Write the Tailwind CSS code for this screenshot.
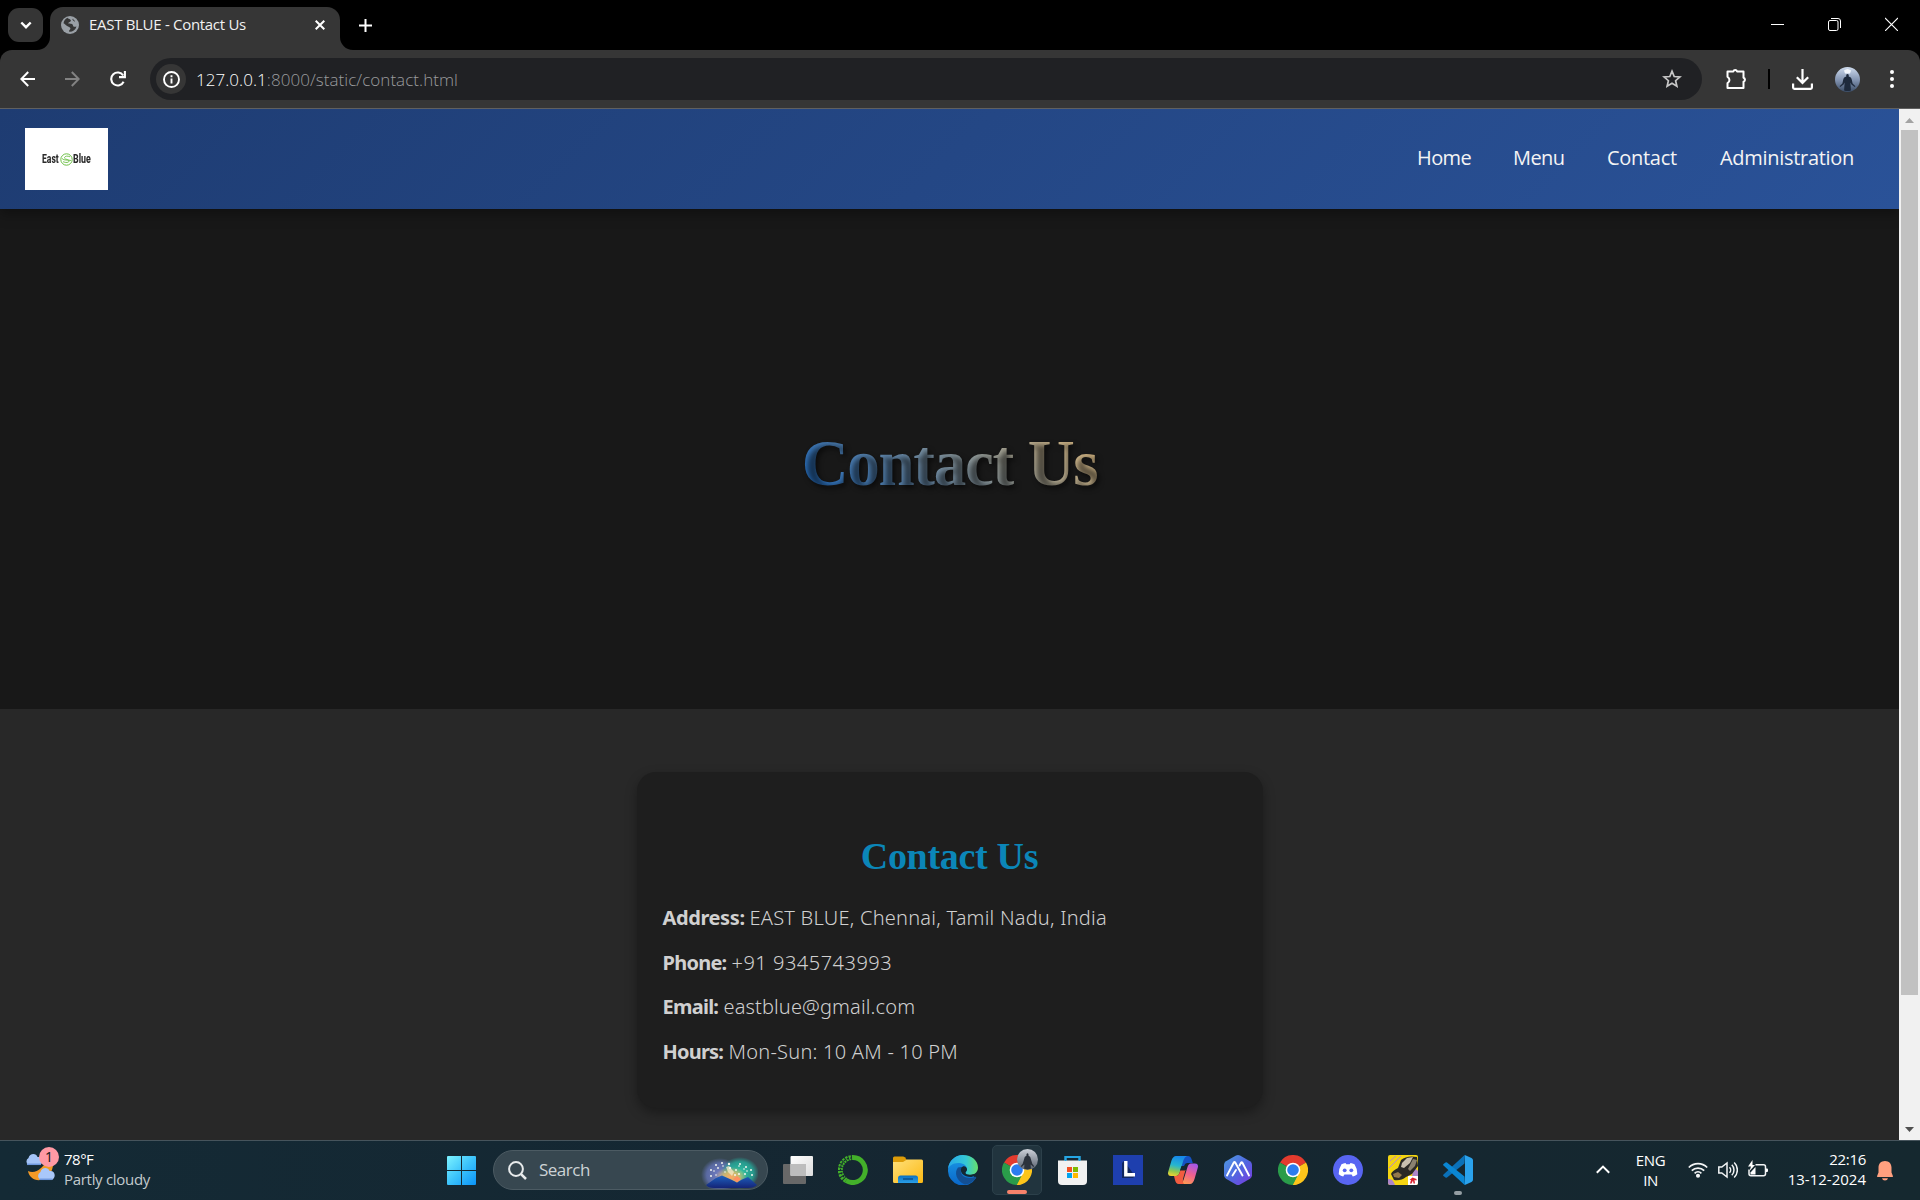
<!DOCTYPE html>
<html lang="en">
<head>
<meta charset="utf-8">
<title>EAST BLUE - Contact Us</title>
<script src="https://cdn.jsdelivr.net/npm/@tailwindcss/browser@4"></script>
</head>
<body class="flex h-[1200px] w-[1920px] flex-col overflow-hidden bg-black font-['Noto_Sans',sans-serif]">

<!-- Tab strip -->
<div class="flex h-[50px] shrink-0 items-start bg-black">
  <div class="mt-2 ml-2 flex h-[34px] w-[35px] items-center justify-center rounded-[11px] bg-[#353535]">
    <svg width="12" height="8" viewBox="0 0 12 8" fill="none" stroke="#fff" stroke-width="2.4"><path d="M1.3 1.5 6 6.2l4.700-4.700"/></svg>
  </div>
  <div class="relative mt-[7px] ml-[7px] flex h-[43px] w-[290px] items-start rounded-t-[13px] bg-[#363636]">
    <svg class="absolute bottom-0 -left-[13px]" width="13" height="13"><path d="M13 0A13 13 0 0 1 0 13H13Z" fill="#363636"/></svg>
    <svg class="absolute -right-[13px] bottom-0" width="13" height="13"><path d="M0 0A13 13 0 0 0 13 13H0Z" fill="#363636"/></svg>
    <svg class="mt-[9px] ml-[11px]" width="18" height="18" viewBox="0 0 18 18"><circle cx="9" cy="9" r="9" fill="#9aa0a6"/><path d="M6.500 1.800C7 3.200 9.800 3 9.900 4.600c0 1.600-2.500 1.400-2.700 3 1.800.2 4.500-.2 4.800 1.900.1 1.500 1.600 1.500 3.500 1A6.800 6.800 0 0 1 8 15.600c-.1-1.700 1.600-1.700 1.400-3.300-.3-1.500-2.200-1.700-3.300-2.400-1.500-1-2.300-2-3.600-2.700A6.900 6.900 0 0 1 6.500 1.800Z" fill="#363636"/><path d="M12 2.900c-.2 1.200.5 2 1.800 2.200" stroke="#363636" fill="none"/></svg>
    <div class="mt-[6px] ml-[10px] w-[225px] font-['Open_Sans'] text-[15px] leading-[22px] tracking-[-0.3px] text-[#f1f1f1]">EAST BLUE - Contact Us</div>
    <svg class="absolute top-[13px] left-[265px]" width="10" height="10" viewBox="0 0 10 10" stroke="#fff" stroke-width="2"><path d="m.7.7 8.600 8.600M9.300.7.7 9.300"/></svg>
  </div>
  <svg class="mt-[19px] ml-[19px]" width="13" height="13" viewBox="0 0 13 13" stroke="#fff" stroke-width="2"><path d="M0 6.500h13M6.500 0v13"/></svg>
  <div class="mt-[17px] mr-[22px] ml-auto flex items-center gap-[44px]">
    <svg width="13" height="14" stroke="#fff"><path d="M0 7.500h13"/></svg>
    <svg width="13" height="14" viewBox="0 0 13 14" fill="none" stroke="#fff"><rect x=".5" y="3.500" width="9.500" height="10" rx="1.500"/><path d="M3 1.500h7a2.500 2.500 0 0 1 2.500 2.500v7"/></svg>
    <svg width="13" height="14" viewBox="0 0 13 14" stroke="#fff" stroke-width="1.100"><path d="m0 1 13 13M13 1 0 14"/></svg>
  </div>
</div>

<!-- Toolbar -->
<div class="flex h-[59px] shrink-0 items-center rounded-t-[12px] border-b border-[#606060] bg-[#363636]">
  <svg class="ml-5" width="15" height="16" viewBox="0 0 15 16" fill="none" stroke="#fff" stroke-width="2"><path d="M15 8H1.500M8.200 1 1.300 8l6.900 7"/></svg>
  <svg class="ml-[30px]" width="15" height="16" viewBox="0 0 15 16" fill="none" stroke="#828282" stroke-width="2"><path d="M0 8h13.500M6.800 1l6.900 7-6.900 7"/></svg>
  <svg class="ml-[30px]" width="16" height="16" viewBox="0 0 16 16" fill="none" stroke="#fff" stroke-width="2.100"><path d="M13.600 10.800A6.500 6.500 0 1 1 13.200 4.500"/><path d="M14.900 0v6.100H9"/></svg>
  <div class="ml-6 flex h-[42px] w-[1552px] items-center rounded-full bg-[#202124]">
    <div class="ml-[6px] flex h-[30px] w-[30px] items-center justify-center rounded-full bg-[#363636]">
      <svg width="17" height="17" viewBox="0 0 17 17" fill="none" stroke="#fff" stroke-width="1.900"><circle cx="8.500" cy="8.500" r="7.500"/><path d="M8.500 7.500v5M8.500 4.300v2"/></svg>
    </div>
    <div class="mt-[1px] ml-[10px] font-['Open_Sans'] text-[17px] font-light tracking-[0.05px] text-[#9a9b9d]"><span class="text-white">127.0.0.1</span>:8000/static/contact.html</div>
    <svg class="mr-[20px] ml-auto" width="20" height="20" viewBox="0 0 20 20" fill="none" stroke="#c7c7c7" stroke-width="1.700"><path d="m10 2.200 2.200 5.300 5.700.5-4.300 3.700 1.300 5.600-4.900-3-4.900 3 1.300-5.600L2.100 8l5.700-.5Z"/></svg>
  </div>
  <svg class="ml-[23px]" width="23" height="22" viewBox="0 0 23 22" fill="none" stroke="#fff" stroke-width="2" stroke-linejoin="round"><path d="M2.500 3.500h5.800a2 2 0 0 1 3.800 0h6.400v6.300a2.100 2.100 0 0 1 0 4V20h-16v-4.800a3.600 3.600 0 0 0 0-6.400Z"/></svg>
  <div class="ml-[20px] h-5 w-[2px] bg-black"></div>
  <svg class="ml-[22px]" width="21" height="21" viewBox="0 0 21 21" fill="none" stroke="#fff" stroke-width="2.200"><path d="M10.500 0v13.500M4.800 8.200l5.700 5.700 5.700-5.700M1.100 14.500v4.100q0 1.300 1.300 1.300h16.200q1.300 0 1.300-1.300v-4.100"/></svg>
  <svg class="ml-[22px]" width="25" height="25" viewBox="0 0 25 25"><defs><linearGradient id="av" x2="0" y2="1"><stop offset="0" stop-color="#cfdcee"/><stop offset=".5" stop-color="#8697b4"/><stop offset="1" stop-color="#3a4c66"/></linearGradient></defs><circle cx="12.500" cy="12.500" r="12.500" fill="url(#av)"/><path d="M9 3.500q3.500-3 7 0l-1 3h-5Z" fill="#f3f7fd"/><path d="M12.500 7c1.100 0 1.500 1 1.200 2.500 1.800.5 2.700 1.200 3.100 3.300l.8 3.700 2.800 2.700-.7.900-3.300-2.500-1-2.200.5 8.200q-3.400 1-6.800 0l.5-8.200-1 2.200-3.300 2.500-.7-.9 2.800-2.700.8-3.700c.4-2.100 1.300-2.800 3.100-3.300C11 8 11.400 7 12.500 7Z" fill="#1e2a3c"/></svg>
  <svg class="ml-[30px]" width="4" height="18" viewBox="0 0 4 18" fill="#fff"><circle cx="2" cy="2" r="2"/><circle cx="2" cy="9" r="2"/><circle cx="2" cy="16" r="2"/></svg>
</div>

<!-- Viewport -->
<div class="flex h-[1031px] shrink-0">
  <main class="flex w-[1899px] flex-col overflow-hidden bg-[#282828]">
    <header class="z-10 flex h-[100px] shrink-0 items-center bg-[linear-gradient(135deg,#1e3c72,#2a5298)] pl-[25px] shadow-[0_5px_12px_rgba(0,0,0,0.35)]">
      <div class="flex h-[62px] w-[83px] items-center bg-white pl-[17px] font-['Roboto'] text-[13px] font-extrabold text-[#2b2b2b]">
        <span class="w-[18px] origin-left scale-x-[0.66]">East</span>
        <svg width="13" height="13" viewBox="0 0 13 13" fill="none" stroke="#6cbf45"><circle cx="6.500" cy="6.500" r="5.700" stroke-width="1"/><path d="M10 3.800C7 2.300 4 3.500 4.600 5.200c.6 1.500 4.700 1 4.500 2.900C8.900 9.700 6 10 3 8.700M2 5.500c2 2.500 6 1 9 2" stroke-width=".9"/></svg>
        <span class="w-[18px] origin-left scale-x-[0.68]">Blue</span>
      </div>
      <nav class="ml-auto flex pb-[2px] font-['Open_Sans'] text-[20px] font-medium tracking-[-0.3px] text-[#f4f4f4]">
        <a class="w-24 tracking-[-0.600px]">Home</a>
        <a class="w-[94px] tracking-[-0.600px]">Menu</a>
        <a class="w-[113px]">Contact</a>
        <a class="w-[179px]">Administration</a>
      </nav>
    </header>

    <section class="flex h-[500px] shrink-0 items-center justify-center bg-[#181818] pt-[7px]">
      <h1 class="bg-[linear-gradient(45deg,#1565c0,#e6bd7c)] bg-clip-text font-['Liberation_Serif',serif] text-[65px] leading-[80px] font-bold tracking-[-1.300px] text-transparent [text-shadow:2.500px_2.500px_5px_rgba(0,0,0,0.55)]">Contact Us</h1>
    </section>

    <section class="flex justify-center pt-[63px]">
      <div class="h-[336px] w-[626px] rounded-[19px] bg-[#1e1e1e] px-[26px] shadow-[0_5px_12px_rgba(0,0,0,0.35)]">
        <h2 class="mt-[59px] text-center font-['Liberation_Serif',serif] text-[38px] leading-[50px] font-bold tracking-[-0.300px] text-[#0b86b8]">Contact Us</h2>
        <div class="mt-[15px] text-[20px] leading-[44.500px] font-light whitespace-nowrap text-[#d0d0d0]">
          <p class="flex h-[44.500px]"><strong class="w-[87px] font-bold tracking-[-0.400px]">Address:</strong><span class="tracking-[0.230px]">EAST BLUE, Chennai, Tamil Nadu, India</span></p>
          <p class="flex h-[44.500px]"><strong class="w-[69px] font-bold tracking-[-0.750px]">Phone:</strong><span class="tracking-[0.500px]">+91 9345743993</span></p>
          <p class="flex h-[44.500px]"><strong class="w-[61px] font-bold tracking-[-0.750px]">Email:</strong><span class="tracking-[0.130px]">eastblue@gmail.com</span></p>
          <p class="flex h-[44.500px]"><strong class="w-[66px] font-bold tracking-[-0.800px]">Hours:</strong><span class="tracking-[0.240px]">Mon-Sun: 10 AM - 10 PM</span></p>
        </div>
      </div>
    </section>
  </main>

  <!-- Scrollbar -->
  <div class="flex w-[21px] flex-col items-center bg-[#f1f1f1]">
    <svg class="mt-[9px]" width="9" height="5"><path d="M0 5 4.500 0 9 5Z" fill="#a3a3a3"/></svg>
    <div class="mt-[7px] h-[865px] w-[17px] bg-[#c1c1c1]"></div>
    <svg class="mt-auto mb-2" width="9" height="5"><path d="M0 0 4.500 5 9 0Z" fill="#505050"/></svg>
  </div>
</div>

<!-- Taskbar -->
<footer class="flex h-[60px] shrink-0 border-t border-[#46545c] bg-[linear-gradient(90deg,#142a35,#152631_50%,#15282f)] text-white">
  <div class="relative ml-[24px] h-full w-[40px]">
    <svg class="absolute top-3 left-0" width="32" height="30" viewBox="0 0 32 30"><path d="M29 7c1 9-3 18-12 20C10 28 5 24 4 18c4 2 9 1 13-3 3-3 6-6 12-8Z" fill="#f39a26"/><path d="M4.500 12a4 4 0 0 1 0-7c1-5 8-5 9-1 5-1 7 6 2 8Z" fill="#a3c3f7"/><path d="M3 11.300h14" stroke="#6e97dc" stroke-width="1.500"/><path d="M16.500 27a4.500 4.500 0 0 1 0-8c1-5 8-5 9-1 6-1 7 7 2 9Z" fill="#a9c8fa"/><path d="M15.500 26.300h13" stroke="#6e97dc" stroke-width="1.500"/></svg>
    <div class="absolute top-[6px] left-[15px] flex h-5 w-5 items-center justify-center rounded-full bg-[#ff99a4] text-[14px] leading-none text-[#1c1c1c]">1</div>
  </div>
  <div class="w-[383px] pt-[8px] font-['Open_Sans'] text-[15px] leading-[20px]">
    <div class="tracking-[-0.500px]">78°F</div>
    <div class="tracking-[-0.300px] text-[#c3cacd]">Partly cloudy</div>
  </div>
  <svg class="mt-[15px]" width="29" height="29" viewBox="0 0 29 29"><defs><linearGradient id="win" x2="1" y2="1"><stop offset="0" stop-color="#7df3ff"/><stop offset=".5" stop-color="#3cc3fb"/><stop offset="1" stop-color="#0a93f8"/></linearGradient></defs><path d="M1 0h13v14H0V1q0-1 1-1ZM15 0h13q1 0 1 1v13H15ZM0 15h14v14H1q-1 0-1-1ZM15 15h14v13q0 1-1 1H15Z" fill="url(#win)"/></svg>
  <div class="mt-[9px] ml-[17px] flex h-[40px] w-[275px] items-center rounded-full border border-[#4c5b63] bg-[#374750] pl-[14px]">
    <svg width="19" height="19" viewBox="0 0 19 19" fill="none" stroke="#e8ebec" stroke-width="2"><circle cx="8" cy="8" r="6.900"/><path d="m12.800 12.800 5.200 5.200" stroke-width="2.500"/></svg>
    <span class="ml-[12px] font-['Open_Sans'] text-[17px] tracking-[-0.500px] text-[#cdd3d6]">Search</span>
    <svg class="mt-[5px] mr-[9px] ml-auto" width="57" height="32" viewBox="0 0 57 32">
      <defs><radialGradient id="g1"><stop offset="0" stop-color="#7680c8"/><stop offset=".7" stop-color="#6070b0" stop-opacity=".85"/><stop offset="1" stop-color="#6070b0" stop-opacity="0"/></radialGradient><radialGradient id="g2"><stop offset="0" stop-color="#2fc9a8"/><stop offset=".7" stop-color="#25a697" stop-opacity=".85"/><stop offset="1" stop-color="#25a697" stop-opacity="0"/></radialGradient><radialGradient id="g3"><stop offset="0" stop-color="#ffa763"/><stop offset=".5" stop-color="#e8bd66" stop-opacity=".8"/><stop offset="1" stop-color="#e8bd66" stop-opacity="0"/></radialGradient><linearGradient id="mt" x2="0" y2="1"><stop offset="0" stop-color="#1e61bf"/><stop offset="1" stop-color="#142477"/></linearGradient></defs>
      <ellipse cx="19" cy="18" rx="19" ry="17" fill="url(#g1)"/><ellipse cx="39" cy="16" rx="19" ry="16" fill="url(#g2)"/><ellipse cx="30" cy="20" rx="16" ry="10" fill="url(#g3)"/>
      <path d="m5 28 10-7 6-2.500 9 4 6 3 5-3 6-2.500 9 8q-3 3-9 3H13q-6 0-8-3Z" fill="url(#mt)"/><path d="m32 22 4 3.500 4-3.500-4-3Z" fill="#ff8f60"/>
      <path d="m25 10 3-1 5 6-2 4-4-4Z" fill="#f3e6c4" opacity=".8"/>
      <g fill="#f3f6ee"><circle cx="15" cy="8" r="1"/><circle cx="17" cy="11" r=".9"/><circle cx="21" cy="6" r="1"/><circle cx="22" cy="9" r=".8"/><circle cx="10" cy="13" r="1"/><circle cx="13" cy="14" r=".8"/><circle cx="10" cy="19" r="1"/><circle cx="15" cy="18" r=".8"/><circle cx="28" cy="7" r="1.200"/><circle cx="29" cy="11" r="1.200"/><circle cx="39" cy="7" r="1"/><circle cx="38" cy="9" r=".8"/><circle cx="45" cy="10" r="1"/><circle cx="43" cy="12" r=".8"/><circle cx="50" cy="13" r="1"/><circle cx="46" cy="14" r=".8"/><circle cx="51" cy="18" r="1"/><circle cx="44" cy="17" r="1"/><circle cx="38" cy="17" r="1.100"/><circle cx="34" cy="18" r="1"/><circle cx="35" cy="13" r="1"/><circle cx="24" cy="15" r=".8"/></g>
    </svg>
  </div>

  <div class="ml-[2px] flex w-[715px] items-start">
    <!-- Task view -->
    <div class="flex h-[58px] w-[55px] items-center justify-center"><svg width="30" height="30" viewBox="0 0 30 30"><defs><linearGradient id="tv" x2="1" y2="1"><stop offset="0" stop-color="#fff"/><stop offset="1" stop-color="#dcdcdc"/></linearGradient></defs><rect x="0" y="9" width="23" height="20" rx="1" fill="#686868"/><rect x="7.500" y="1" width="22.500" height="20" rx="1" fill="url(#tv)"/><path d="M7.500 9H23v12H8.500q-1 0-1-1Z" fill="#bdbdbd"/></svg></div>
    <!-- Anaconda -->
    <div class="flex h-[58px] w-[55px] items-center justify-center"><svg width="30" height="30" viewBox="0 0 30 30" fill="none" stroke="#43b02a"><path d="M15 2.500a12.500 12.500 0 1 1-7 23" stroke-width="5"/><path d="M8 25.500A12.500 12.500 0 0 1 15 2.500" stroke-width="5" stroke-dasharray="2.200 .9"/><path d="M6 22A11 11 0 0 1 13 3" stroke="#142833" stroke-width="1.200" stroke-dasharray="2 1.500"/></svg></div>
    <!-- Explorer -->
    <div class="flex h-[58px] w-[55px] items-center justify-center"><svg width="30" height="28" viewBox="0 0 30 28"><defs><linearGradient id="fo" x2="1" y2="1"><stop offset="0" stop-color="#ffe07a"/><stop offset="1" stop-color="#fbb914"/></linearGradient><linearGradient id="fb" x2="0" y2="1"><stop offset="0" stop-color="#0a6fc0"/><stop offset="1" stop-color="#2aa0e8"/></linearGradient></defs><path d="M0 2q0-1.500 1.500-1.500H10q1 0 1.800.8L14 4v2H0Z" fill="#dd9c08"/><path d="M0 6h10l4-2.500h14.500Q30 3.500 30 5v20.500q0 1.500-1.500 1.500h-27Q0 27 0 25.500Z" fill="url(#fo)"/><path d="M5 27v-5q0-2.500 2.500-2.500h15q2.500 0 2.500 2.500v5Z" fill="url(#fb)"/><path d="M10 23h10" stroke="#0a4a86" stroke-width="1.400"/></svg></div>
    <!-- Edge -->
    <div class="flex h-[58px] w-[55px] items-center justify-center"><svg width="30" height="30" viewBox="0 0 30 30"><defs><linearGradient id="e1" x1="0" x2="1"><stop offset="0" stop-color="#27a8e8"/><stop offset=".6" stop-color="#35c8d6"/><stop offset="1" stop-color="#66e06a"/></linearGradient><linearGradient id="e2" x2="0" y2="1"><stop offset="0" stop-color="#1b9be8"/><stop offset="1" stop-color="#0a66c8"/></linearGradient></defs><path d="M0 15A15 15 0 0 1 15 0l6 18 7 5A15 15 0 0 1 0 15Z" fill="url(#e2)"/><path d="M0 14C1 5 8 0 15 0c9 0 15 6 15 12.500 0 5-4 7.500-8 7.500-3.500 0-5-1.500-4.500-2.500 1-1.300 1.700-2.200 1.500-3.500C18.500 9.500 14 8 10 8 5 8 1 11 0 14Z" fill="url(#e1)"/><path d="M10 12.500C6 17 8 26 17 29.500c5-.5 9-3.500 11-6.500.8-1.200-.3-1.600-1.200-1.100-6 2.700-14 .1-14-5.900 0-2 .8-3 1.500-4-1.500-.3-3 .2-4.300.5Z" fill="#134f93"/><path d="M14.500 11.700c-2 1-2.500 5 .5 7.800 2 1.700 5 2.700 8.500 2.500l5-2V18c-3 2.300-11.500 2.500-11-.5 1-1.300 1.700-2.200 1.500-3.500-.3-2-2.500-3.500-4.500-2.300Z" fill="#142833"/></svg></div>
    <!-- Chrome, active window -->
    <div class="relative mt-[4px] ml-[2px] flex h-[50px] w-[50px] items-center justify-center rounded-[5px] border border-[#2c404a] bg-[#21343e]">
      <svg width="30" height="30" viewBox="0 0 30 30"><path d="M15 15 2 7.500A15 15 0 0 1 28 7.500Z" fill="#e33b2e"/><path d="M15 15 28 7.500A15 15 0 0 1 15 30Z" fill="#fdc51b"/><path d="M15 15v15A15 15 0 0 1 2 7.500Z" fill="#2a9c4a"/><path d="m9 18.500 6 3.500 6-3.500L15 30Q10 28 9 18.500Z" fill="#2a9c4a"/><path d="M15 8h13.300l-7.300 3Z" fill="#e33b2e"/><path d="m21 18.500-6 11.500h2q7-2 11-8.500Z" fill="#fdc51b"/><circle cx="15" cy="15" r="7.300" fill="#fff"/><circle cx="15" cy="15" r="5.800" fill="#2b7cf0"/></svg>
      <svg class="absolute top-[3px] left-[24px]" width="21" height="21" viewBox="0 0 25 25"><defs><linearGradient id="av2" x2="0" y2="1"><stop offset="0" stop-color="#cdd2da"/><stop offset=".55" stop-color="#8b929d"/><stop offset="1" stop-color="#596270"/></linearGradient></defs><circle cx="12.500" cy="12.500" r="12.500" fill="url(#av2)"/><path d="M12.500 5c1 0 1.400 1 1.200 3 1.500.5 2.300 1.500 2.700 3.500l1.800 6 2.300 3-1 1-3.300-3 .3 5q-4 1-8 0l.3-5-3.300 3-1-1 2.300-3 1.800-6c.4-2 1.200-3 2.700-3.500C11.100 6 11.500 5 12.500 5Z" fill="#2b323c"/></svg>
      <div class="absolute bottom-0 left-[14px] h-[4px] w-[20px] rounded-full bg-[#f8826b]"></div>
    </div>
    <!-- Store -->
    <div class="ml-[3px] flex h-[58px] w-[55px] items-center justify-center"><svg width="29" height="30" viewBox="0 0 29 30"><path d="M7.500 7V2h14v5" fill="none" stroke="#2cb6ef" stroke-width="2"/><path d="M0 5.500h29V26q0 4-4 4H4q-4 0-4-4Z" fill="#f1f1f1"/><path d="M7.500 6V2h14v4" fill="none" stroke="#25a6e4" stroke-width="1.800"/><path d="M9 12h5v5H9Z" fill="#f25022"/><path d="M15 12h5v5h-5Z" fill="#7fba00"/><path d="M9 18h5v5H9Z" fill="#00a4ef"/><path d="M15 18h5v5h-5Z" fill="#ffb900"/></svg></div>
    <!-- L -->
    <div class="flex h-[58px] w-[55px] items-center justify-center"><svg width="30" height="30" viewBox="0 0 30 30"><path d="M0 0h30v30H0Z" fill="#1e3fae"/><path d="m11 6-2 2v15h11l2-2Z" fill="#10265f"/><path d="M12.800 6v13.700H22" fill="none" stroke="#fff" stroke-width="3.400"/></svg></div>
    <!-- Copilot -->
    <div class="flex h-[58px] w-[55px] items-center justify-center"><svg width="30" height="28" viewBox="0 0 30 28"><defs><linearGradient id="c1" x1=".4" y1="0" x2=".2" y2="1"><stop offset="0" stop-color="#1789ea"/><stop offset=".45" stop-color="#26b6cf"/><stop offset=".75" stop-color="#8fc850"/><stop offset="1" stop-color="#f2d330"/></linearGradient><linearGradient id="c2" x1=".7" y1="0" x2=".3" y2="1"><stop offset="0" stop-color="#a557e8"/><stop offset=".5" stop-color="#f0608e"/><stop offset="1" stop-color="#fd9a52"/></linearGradient></defs><path d="M14 0h6q2.500 0 3.500 3l1.300 4H19q-2 0-3 3l-3 1Z" fill="#1452c4"/><path d="M8 0h11q-2.500.8-3.500 4l-4 13q-1 3-3.500 3H3q-4 0-2.700-4.500l3.200-11Q5 0 8 0Z" fill="url(#c1)"/><path d="M22 28H12q2.500-.8 3.500-4l4-13q1-3.500 3.500-3.500h4q4 0 2.700 4.500l-3.200 11Q25 28 22 28Z" fill="url(#c2)"/><path d="M16 28h-5.500q-2.500 0-3.500-4l-1-4h2q2.500 0 3.500-3l1-3h5l-2.500 9q-.8 3 1 5Z" fill="#f25c40"/><path d="M12 14.500 13.500 10h5L17 14.500Z" fill="#152832"/></svg></div>
    <!-- Hexagon -->
    <div class="flex h-[58px] w-[55px] items-center justify-center"><svg width="28" height="30" viewBox="0 0 28 30"><defs><linearGradient id="hx" x2="1" y2="1"><stop offset="0" stop-color="#4f9ee3"/><stop offset=".5" stop-color="#5068e0"/><stop offset="1" stop-color="#7b38e0"/></linearGradient></defs><path d="M12 .6q2-1.100 4 0l10 5.700q2 1.200 2 3.500v10.400q0 2.300-2 3.500l-10 5.700q-2 1.100-4 0L2 23.700q-2-1.200-2-3.500V9.800q0-2.300 2-3.500Z" fill="url(#hx)"/><g fill="none" stroke="#fff" stroke-width="1.900" stroke-linecap="round" stroke-linejoin="round"><path d="M3 20.500 9.800 7.500q.7-1.300 1.400 0l7.300 13"/><path d="m8.500 20.500 3.500-5.500M15.500 10.500l1.500-2.700q.7-1.200 1.400 0L25 20.500"/></g></svg></div>
    <!-- Chrome -->
    <div class="flex h-[58px] w-[55px] items-center justify-center"><svg width="30" height="30" viewBox="0 0 30 30"><path d="M15 15 2 7.500A15 15 0 0 1 28 7.500Z" fill="#e33b2e"/><path d="M15 15 28 7.500A15 15 0 0 1 15 30Z" fill="#fdc51b"/><path d="M15 15v15A15 15 0 0 1 2 7.500Z" fill="#2a9c4a"/><path d="m9 18.500 6 3.500 6-3.500L15 30Q10 28 9 18.500Z" fill="#2a9c4a"/><path d="m21 18.500-6 11.500h2q7-2 11-8.500Z" fill="#fdc51b"/><circle cx="15" cy="15" r="7.300" fill="#fff"/><circle cx="15" cy="15" r="5.800" fill="#2b7cf0"/></svg></div>
    <!-- Discord -->
    <div class="flex h-[58px] w-[55px] items-center justify-center"><svg width="30" height="30" viewBox="0 0 30 30"><circle cx="15" cy="15" r="15" fill="#5865f2"/><path d="M8.500 9.300q2-1 4-1.300l.8 1.300h3.400l.8-1.300q2 .3 4 1.300 3 4.500 2.800 10Q22 21 19.800 21.500l-1.200-2h-7.200l-1.200 2Q8 21 5.700 19.300q-.2-5.500 2.800-10Z" fill="#fff"/><circle cx="11.700" cy="15.300" r="1.900" fill="#5865f2"/><circle cx="18.300" cy="15.300" r="1.900" fill="#5865f2"/></svg></div>
    <!-- Game -->
    <div class="flex h-[58px] w-[55px] items-center justify-center"><svg width="30" height="30" viewBox="0 0 30 30"><rect width="30" height="30" rx="2" fill="#f4d512"/><path d="M0 24q5-1 7 6H2q-2 0-2-2ZM0 8l7-6M26 12l4 4v5h-6Z" fill="#ad85c8"/><path d="M1 13 13 1M2 6l6-5" stroke="#b98ac4" stroke-width="1"/><path d="M3 19q1-3 7-6l3-8q6-5 16-3l1 9-6 8-6 3q-5 4-12 3Z" fill="#2b2925"/><path d="m14 8 5-5 6-1-3 6-6 5-3-1Z" fill="#c9bfae"/><path d="m25 4 4 1-2 6-5 5-2-2Z" fill="#8b8170"/><path d="m5 19 5-2 4 3-3 3-5-1Z" fill="#94784c"/><path d="M20 21h10v7q0 2-2 2h-8Z" fill="#fff"/><path d="m21.500 25 3-2.500 4 1.500v1.500l-2-.5.500 3.500h-1.500l-.5-3-1.500 3h-1.500l1-3.500Z" fill="#d9202e"/></svg></div>
    <!-- VS Code -->
    <div class="relative flex h-[58px] w-[55px] items-center justify-center"><svg width="30" height="30" viewBox="0 0 30 30"><path d="m22 0-.5 8.500L4 22.500q-.8.500-1.500 0L.5 21q-.8-.8 0-1.600L20.500 1Q21 .3 22 0Z" fill="#0b71b8"/><path d="M22 30l-.5-8.500L4 7.500q-.8-.5-1.500 0L.5 9q-.8.800 0 1.600L20.500 29q.5.700 1.500 1Z" fill="#0a86d3"/><path d="M21.800 0 28.500 3Q30 3.700 30 5.300v19.400q0 1.600-1.500 2.300l-6.700 3Q22 30 22 28V2q0-2-.2-2Z" fill="#2aa2ec"/></svg><div class="absolute bottom-[4px] left-[24px] h-[4px] w-[8px] rounded-full bg-[#949ea3]"></div></div>
  </div>

  <!-- Tray -->
  <div class="ml-auto flex">
    <svg class="mt-[24px]" width="14" height="9" viewBox="0 0 14 9" fill="none" stroke="#fff" stroke-width="2"><path d="m.8 7.800L7 1.600l6.200 6.200"/></svg>
    <div class="ml-[20px] w-[41px] pt-[9px] text-center font-['Open_Sans'] text-[15px] leading-[20px] tracking-[-0.400px]"><div>ENG</div><div>IN</div></div>
    <svg class="mt-[20px] ml-[17px]" width="20" height="17" viewBox="0 0 20 17" fill="none" stroke="#f2f4f5" stroke-width="1.700"><path d="M.8 6.500a13 13 0 0 1 18.400 0M3.800 9.600a8.800 8.800 0 0 1 12.400 0M6.600 12.300a4.900 4.900 0 0 1 6.800 0"/><circle cx="10" cy="14.700" r="1.200" fill="#fff"/></svg>
    <svg class="mt-[20px] ml-[10px]" width="20" height="18" viewBox="0 0 20 18" fill="none" stroke="#f2f4f5" stroke-width="1.500"><path d="M.8 6h3L9 2v14l-5.200-4h-3Z"/><path d="M11.500 6.200a4 4 0 0 1 0 5.600M13.800 3.800a7.300 7.300 0 0 1 0 10.400M16.200 1.500a10.500 10.500 0 0 1 0 15"/></svg>
    <svg class="mt-[19px] ml-[10px]" width="20" height="17" viewBox="0 0 20 17"><path d="M7.500 4.800h8q2 0 2 2v7q0 2-2 2H3q-2 0-2-2V9.500" fill="none" stroke="#f2f4f5" stroke-width="1.500"/><path d="M18 8.500h1q1 0 1 1v1.500q0 1-1 1h-1Z" fill="#fff"/><path d="M4.500 0 0 6.500h3L1.500 11 7 5H4.500Z" fill="#fff"/><path d="M2.500 12.500 7.500 7v7.500h-5Z" fill="#fff"/></svg>
    <div class="ml-[16px] w-[82px] pt-[8px] text-right font-['Open_Sans'] text-[15px] leading-[20px]"><div class="tracking-[-0.300px]">22:16</div><div>13-12-2024</div></div>
    <svg class="mt-[20px] mr-[27px] ml-[11px]" width="16" height="20" viewBox="0 0 16 20" fill="#ffa07f"><path d="M8 0c4 0 6.500 2.800 6.500 6.500v5L16 15.300q.1.700-.7.700H.7q-.8 0-.7-.700l1.500-3.800v-5C1.500 2.800 4 0 8 0ZM5 17.200h6Q10.500 19.500 8 19.500T5 17.200Z"/></svg>
  </div>
</footer>
</body>
</html>
